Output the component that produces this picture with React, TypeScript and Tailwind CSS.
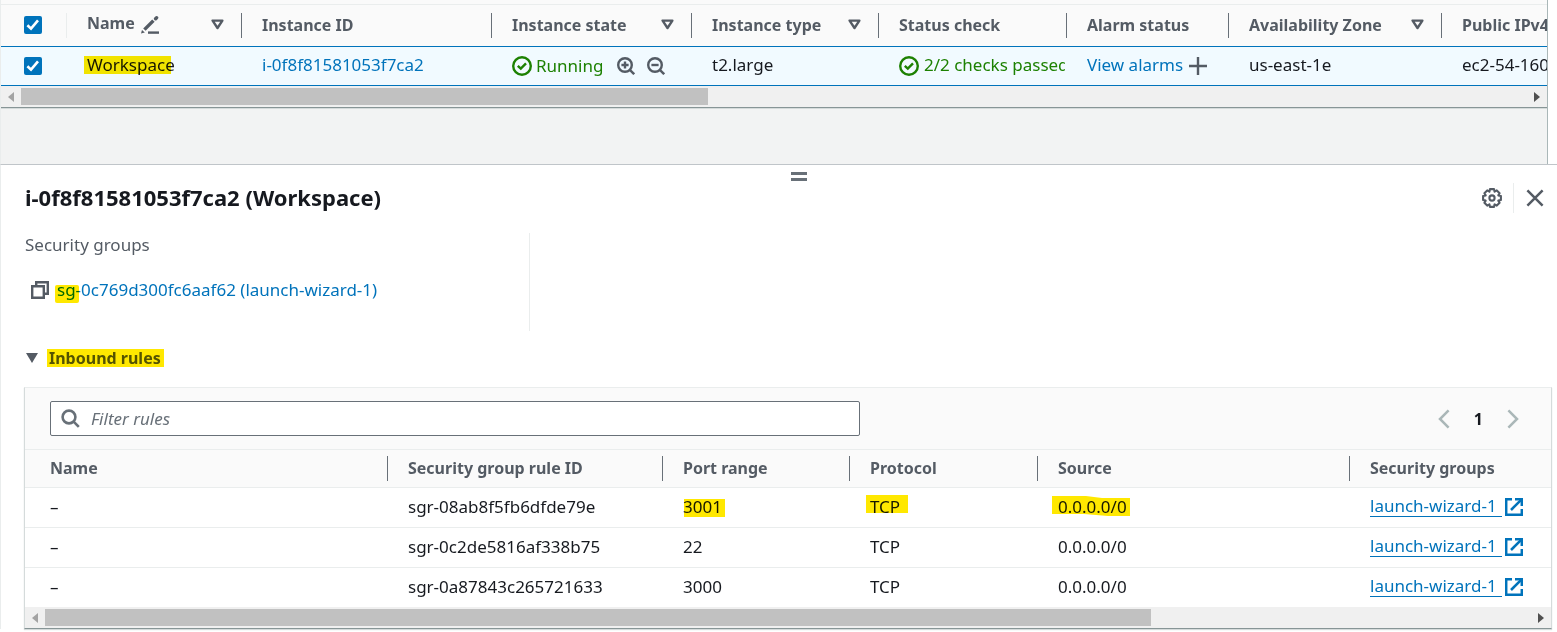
import type { ReactNode } from 'react';

type IconProps = { className?: string };

function SortCaret() {
  return (
    <svg viewBox="0 0 13 11" className="h-[11px] w-[13px] shrink-0 fill-none stroke-current" strokeWidth="2.4" aria-hidden="true">
      <path d="M1.6 1.6h9.8L6.5 9z" strokeLinejoin="round" />
    </svg>
  );
}

function PencilIcon() {
  return (
    <svg viewBox="0 0 18 18" className="h-[18px] w-[18px] shrink-0" aria-hidden="true">
      <path d="m3.4 13.6 9-9" className="fill-none stroke-current" strokeWidth="3.4" />
      <path d="m14.6 2.8 1-1" className="fill-none stroke-current" strokeWidth="3.4" strokeLinecap="round" />
      <path d="M0 17.6 1 14l2.8 2.6z" className="fill-current" />
      <path d="M7 16.6h11" className="fill-none stroke-current" strokeWidth="2.4" />
    </svg>
  );
}

function CheckCircle() {
  return (
    <svg viewBox="0 0 20 20" className="h-5 w-5 shrink-0 fill-none stroke-current" strokeWidth="2.4" aria-hidden="true">
      <circle cx="10" cy="10" r="8.8" />
      <path d="m5.8 9.8 3 2.8 5.2-5.2" />
    </svg>
  );
}

function ZoomIcon({ plus }: { plus?: boolean }) {
  return (
    <svg viewBox="0 0 18 18" className="h-[18px] w-[18px] shrink-0 fill-none stroke-current" strokeWidth="2.4" aria-hidden="true">
      <circle cx="8" cy="8" r="6.8" />
      <path d="m12.8 12.8 4.4 4.4" />
      <path d={plus ? 'M4.4 8h7.2M8 4.4v7.2' : 'M4.4 8h7.2'} />
    </svg>
  );
}

function SearchIcon({ className }: IconProps) {
  return (
    <svg viewBox="0 0 19 19" className={className} aria-hidden="true">
      <g className="fill-none stroke-current" strokeWidth="2.6">
        <circle cx="8" cy="8" r="6.4" />
        <path d="m12.6 12.6 5.2 5.2" />
      </g>
    </svg>
  );
}

function PlusIcon() {
  return (
    <svg viewBox="0 0 18 18" className="h-[18px] w-[18px] shrink-0 fill-none stroke-current" strokeWidth="2.4" aria-hidden="true">
      <path d="M0 9h18M9 0v18" />
    </svg>
  );
}

function GearIcon() {
  return (
    <svg viewBox="0 0 20 20" className="h-5 w-5 fill-none stroke-current" strokeWidth="2.1" strokeLinejoin="round" aria-hidden="true">
      <path d="M18.9 8v4l-2.6.6 1.3 2.2-2.8 2.8-2.2-1.3-.6 2.6H8l-.6-2.6-2.2 1.3-2.8-2.8 1.3-2.2-2.6-.6V8l2.6-.6-1.3-2.2 2.8-2.8 2.2 1.3.6-2.6h4l.6 2.6 2.2-1.3 2.8 2.8-1.3 2.2z" />
      <circle cx="10" cy="10" r="2.6" />
    </svg>
  );
}

function CloseIcon() {
  return (
    <svg viewBox="0 0 18 18" className="h-[18px] w-[18px] fill-none stroke-current" strokeWidth="2.5" aria-hidden="true">
      <path d="m1.4 1.4 15.2 15.2M16.6 1.4 1.4 16.6" />
    </svg>
  );
}

function CopyIcon() {
  return (
    <svg viewBox="0 0 18 18" className="h-[18px] w-[18px] fill-none stroke-current" strokeWidth="2.4" aria-hidden="true">
      <path d="M1.2 5.2h11.6v11.6H1.2z" />
      <path d="M5.2 5V1.2h11.6v11.6H13" />
    </svg>
  );
}

function ExternalIcon() {
  return (
    <svg viewBox="0 0 18 18" className="h-[18px] w-[18px] fill-none stroke-current" strokeWidth="2.5" aria-hidden="true">
      <path d="M7 1.2H1.2v15.6h15.6V11" />
      <path d="M10 1.2h6.8V8" />
      <path d="M6 12 16.4 1.6" />
    </svg>
  );
}

function Chevron({ flip }: { flip?: boolean }) {
  return (
    <svg viewBox="0 0 12 20" className="h-5 w-3 fill-none stroke-current" strokeWidth="2.5" aria-hidden="true">
      <path d={flip ? 'm1.4 1.4 8.6 8.6-8.6 8.6' : 'M10.6 1.4 2 10l8.6 8.6'} />
    </svg>
  );
}

function Checkbox({ label }: { label: string }) {
  return (
    <span className="inline-grid h-[18px] w-[18px]">
      <input
        type="checkbox"
        defaultChecked
        aria-label={label}
        className="col-start-1 row-start-1 h-[18px] w-[18px] appearance-none rounded-xs bg-[#0073bb]"
      />
      <svg viewBox="0 0 18 18" className="pointer-events-none col-start-1 row-start-1 h-[18px] w-[18px] fill-none stroke-white" strokeWidth="2.6" aria-hidden="true">
        <path d="m3.4 9.2 3.6 3.4 7-8.2" />
      </svg>
    </span>
  );
}

function Marked({ children, marker }: { children: ReactNode; marker: string }) {
  return (
    <span className="relative">
      {children}
      <span className={`pointer-events-none absolute bg-[#ffe800] mix-blend-multiply ${marker}`} />
    </span>
  );
}

function ScrollStrip({ thumb }: { thumb: string }) {
  return (
    <div className="flex h-[21px] items-center bg-[#f0f0f0]">
      <button aria-label="Scroll left" className="flex w-5 shrink-0 justify-center text-[#a3a3a3]">
        <svg viewBox="0 0 6 10" className="h-[10px] w-[6px] fill-current" aria-hidden="true"><path d="M6 0v10L0 5z" /></svg>
      </button>
      <div className="h-[17px] min-w-0 flex-1">
        <div className={`h-full bg-[#c1c1c1] ${thumb}`} />
      </div>
      <button aria-label="Scroll right" className="flex w-5 shrink-0 justify-center text-[#505050]">
        <svg viewBox="0 0 6 10" className="h-[10px] w-[6px] fill-current" aria-hidden="true"><path d="M0 0v10l6-5z" /></svg>
      </button>
    </div>
  );
}

function HeadCell({ children, sort, last }: { children: ReactNode; sort?: boolean; last?: boolean }) {
  return (
    <th className="p-0 text-left font-bold">
      <div className={`flex h-[25px] items-center justify-between pb-0.5 pl-5 pr-[17px] ${last ? '' : 'border-r border-[#687078]'}`}>
        {children}
        {sort && <SortCaret />}
      </div>
    </th>
  );
}

const rules = [
  { id: 'sgr-08ab8f5fb6dfde79e', port: '3001', marked: true },
  { id: 'sgr-0c2de5816af338b75', port: '22', marked: false },
  { id: 'sgr-0a87843c265721633', port: '3000', marked: false },
];

function InstancesTable() {
  return (
    <section className="mr-[9px] border-x border-l-[#eaeded] border-r-[#aab7b8] bg-[#f2f3f3]">
      <div className="h-[5px] border-b border-[#eaeded] bg-[#fafafa]" />
      <div className="overflow-hidden">
        <table className="w-[1742px] table-fixed border-separate border-spacing-0 whitespace-nowrap">
          <colgroup>
            <col className="w-[66px]" />
            <col className="w-[175px]" />
            <col className="w-[250px]" />
            <col className="w-[200px]" />
            <col className="w-[187px]" />
            <col className="w-[188px]" />
            <col className="w-[162px]" />
            <col className="w-[213px]" />
            <col />
          </colgroup>
          <thead className="bg-[#fafafa] text-[#545b64]">
            <tr className="h-[41px]">
              <th className="p-0">
                <div className="flex h-[25px] items-center border-r border-[#eaeded] pb-0.5 pl-[23px]"><Checkbox label="Select all instances" /></div>
              </th>
              <HeadCell sort>
                <span className="flex items-center gap-1.5 pb-1">
                  Name
                  <button aria-label="Edit name" className="pt-1"><PencilIcon /></button>
                </span>
              </HeadCell>
              <HeadCell>Instance ID</HeadCell>
              <HeadCell sort>Instance state</HeadCell>
              <HeadCell sort>Instance type</HeadCell>
              <HeadCell>Status check</HeadCell>
              <HeadCell>Alarm status</HeadCell>
              <HeadCell sort>Availability Zone</HeadCell>
              <HeadCell last>Public IPv4</HeadCell>
            </tr>
          </thead>
          <tbody className="bg-[#f1faff] text-[17px] leading-6 text-[#16191f] [&_td]:border-y [&_td]:border-[#0073bb] [&_td]:p-0">
            <tr className="h-10">
              <td><div className="flex pl-[23px]"><Checkbox label="Select Workspace" /></div></td>
              <td><div className="pb-0.5 pl-5"><Marked marker="-left-[3px] top-[3px] h-[18px] w-[87px]">Workspace</Marked></div></td>
              <td><div className="pb-0.5 pl-5"><a href="#instance" className="text-[#0073bb]">i-0f8f81581053f7ca2</a></div></td>
              <td>
                <div className="flex items-center pl-5 text-[#545b64]">
                  <span className="flex items-center gap-1 text-[#1d8102]"><CheckCircle />Running</span>
                  <button aria-label="Filter in" className="ml-3.5"><ZoomIcon plus /></button>
                  <button aria-label="Filter out" className="ml-3"><ZoomIcon /></button>
                </div>
              </td>
              <td><div className="pb-0.5 pl-5">t2.large</div></td>
              <td>
                <div className="ml-5 mr-0.5 flex items-center gap-[5px] overflow-hidden text-[#1d8102]">
                  <CheckCircle />
                  <span className="pb-0.5">2/2 checks passed</span>
                </div>
              </td>
              <td>
                <div className="flex items-center gap-1.5 pl-5 text-[#545b64]">
                  <a href="#alarms" className="pb-0.5 text-[#0073bb]">View alarms</a>
                  <button aria-label="Add alarm"><PlusIcon /></button>
                </div>
              </td>
              <td><div className="pb-0.5 pl-5">us-east-1e</div></td>
              <td><div className="pb-0.5 pl-5">ec2-54-160</div></td>
            </tr>
          </tbody>
        </table>
      </div>
      <ScrollStrip thumb="w-[45.6%]" />
      <div className="h-[57px] border-t border-[#879596] shadow-[inset_0_1px_0_#d5dbdb]" />
    </section>
  );
}

function InboundRules() {
  return (
    <div className="ml-[23px] mr-[5px] mt-[17px] border border-[#d5dbdb] border-b-[#879596] border-t-[#eaeded] bg-white shadow-[0_1px_1px_#d5dbdb]">
      <div className="flex h-[62px] items-center justify-between border-b border-[#eaeded] bg-[#fafafa] pl-[25px] pr-8">
        <label className="flex h-[35px] w-[810px] max-w-full items-center rounded-xs border border-[#687078] bg-white pl-2.5 text-[#687078]">
          <SearchIcon className="h-[19px] w-[19px] shrink-0" />
          <input
            type="text"
            aria-label="Filter rules"
            placeholder="Filter rules"
            className="min-w-0 flex-1 bg-transparent pl-[11px] text-[17px] outline-none placeholder:italic placeholder:text-[#687078]"
          />
        </label>
        <nav aria-label="Pagination" className="flex items-center gap-6 text-[#aab7b8]">
          <button aria-label="Previous page"><Chevron /></button>
          <button className="font-bold text-[#16191f]">1</button>
          <button aria-label="Next page"><Chevron flip /></button>
        </nav>
      </div>
      <div className="overflow-hidden">
        <table className="w-full min-w-[1526px] table-fixed border-separate border-spacing-0 whitespace-nowrap">
          <colgroup>
            <col className="w-[363px]" />
            <col className="w-[275px]" />
            <col className="w-[187px]" />
            <col className="w-[188px]" />
            <col className="w-[312px]" />
            <col />
          </colgroup>
          <thead className="bg-[#fafafa] text-[#545b64]">
            <tr className="h-[38px] [&>th]:border-b [&>th]:border-[#eaeded]">
              <th className="p-0 text-left font-bold">
                <div className="flex h-[25px] items-center border-r border-[#687078] pb-0.5 pl-[25px]">Name</div>
              </th>
              <HeadCell>Security group rule ID</HeadCell>
              <HeadCell>Port range</HeadCell>
              <HeadCell>Protocol</HeadCell>
              <HeadCell>Source</HeadCell>
              <HeadCell last>Security groups</HeadCell>
            </tr>
          </thead>
          <tbody className="text-[17px] text-[#16191f] [&_td]:border-[#eaeded] [&_td]:p-0 [&_td>div]:flex [&_td>div]:h-[39px] [&_td>div]:items-center [&_td>div]:pb-0.5 [&_tr:not(:last-child)>td]:border-b">
            {rules.map((rule) => (
              <tr key={rule.id}>
                <td><div className="pl-[25px]">–</div></td>
                <td><div className="pl-5">{rule.id}</div></td>
                <td>
                  <div className="pl-5">
                    {rule.marked ? <Marked marker="left-[1px] top-[4px] h-[18px] w-[41px]">{rule.port}</Marked> : rule.port}
                  </div>
                </td>
                <td>
                  <div className="pl-5">
                    {rule.marked ? <Marked marker="-left-1 top-0 h-[18px] w-[42px]">TCP</Marked> : 'TCP'}
                  </div>
                </td>
                <td>
                  <div className="pl-5">
                    <span className="relative">
                      0.0.0.0/0
                      {rule.marked && (
                        <svg viewBox="0 0 78 20" className="pointer-events-none absolute -left-1.5 top-[1px] h-5 w-[78px] fill-[#ffe800] mix-blend-multiply" aria-hidden="true">
                          <path d="M0 0h34l16 2h28v18H56l-24-2H0z" />
                        </svg>
                      )}
                    </span>
                  </div>
                </td>
                <td>
                  <div className="pl-5">
                    <a href="#launch-wizard-1" className="flex items-center text-[#0073bb]">
                      <span className="mr-[3px] border-b border-[#0073bb] pr-[5px] leading-5">launch-wizard-1</span>
                      <ExternalIcon />
                    </a>
                  </div>
                </td>
              </tr>
            ))}
          </tbody>
        </table>
      </div>
      <ScrollStrip thumb="w-[74.4%]" />
    </div>
  );
}

export default function App() {
  return (
    <main className="min-h-screen overflow-hidden bg-white font-['Noto_Sans',sans-serif] text-[16px] leading-6 text-[#16191f]">
      <InstancesTable />
      <section className="border-l border-t border-l-[#eaeded] border-t-[#c0c5c9]">
        <div className="flex h-[18px] items-center justify-center pl-10 pt-1">
          <button aria-label="Resize panel" className="flex w-4 flex-col gap-[3px]">
            <span className="h-[3px] bg-[#687078]" />
            <span className="h-[3px] bg-[#687078]" />
          </button>
        </div>
        <header className="flex h-[30px] items-center justify-between pl-6 pr-[13px]">
          <h2 className="pb-0.5 text-[22px] font-bold">i-0f8f81581053f7ca2 (Workspace)</h2>
          <div className="flex items-center text-[#545b64]">
            <button aria-label="Preferences" className="mr-[11px]"><GearIcon /></button>
            <div className="h-[30px] w-px bg-[#eaeded]" />
            <button aria-label="Close panel" className="ml-3"><CloseIcon /></button>
          </div>
        </header>
        <div className="mt-5 grid grid-cols-3 pl-6 pr-[17px] text-[17px]">
          <dl className="h-[98px] border-r border-[#eaeded]">
            <dt className="text-[#545b64]">Security groups</dt>
            <dd className="mt-[21px] flex items-center gap-2 pl-1.5">
              <button aria-label="Copy security group" className="text-[#545b64]"><CopyIcon /></button>
              <a href="#security-group" className="text-[#0073bb]">
                <Marked marker="-left-[2px] top-[7px] h-[18px] w-[24px] rounded-xs">sg-</Marked>0c769d300fc6aaf62 (launch-wizard-1)
              </a>
            </dd>
          </dl>
        </div>
        <h3 className="mt-[15px] pl-[25px] font-bold text-[#545b64]">
          <button aria-expanded="true" className="flex items-center gap-[11px]">
            <svg viewBox="0 0 12 10" className="h-[10px] w-3 fill-current" aria-hidden="true"><path d="M0 0h12L6 10z" /></svg>
            <Marked marker="-left-0.5 top-[3px] h-[18px] w-[117px]">Inbound rules</Marked>
          </button>
        </h3>
        <InboundRules />
      </section>
    </main>
  );
}
